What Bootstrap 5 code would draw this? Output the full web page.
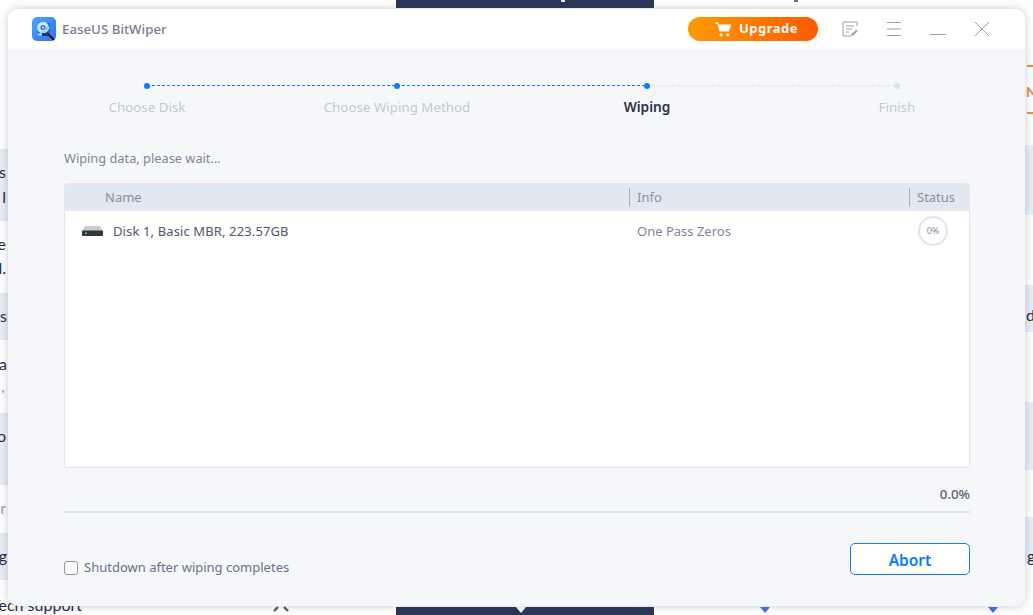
<!doctype html>
<html lang="en">
<head>
<meta charset="utf-8">
<title>EaseUS BitWiper</title>
<link href="https://cdn.jsdelivr.net/npm/bootstrap@5.3.0/dist/css/bootstrap.min.css" rel="stylesheet">
<style>
html,body{margin:0;height:615px;overflow:hidden;background:#fff}
body{position:relative;width:1033px;font-family:"Noto Sans","Open Sans",sans-serif}
/* page behind the window */
.behind{position:absolute;inset:0;font-family:"Lato","Liberation Sans",sans-serif;color:#1f2a44;font-size:16px}
.behind .bandx{position:absolute;background:#e8edf5}
.behind .frag{position:absolute;line-height:20px;white-space:nowrap}
.behind .faint{color:#9aa0ad}
.navy{position:absolute;left:396px;width:258px;height:8px;background:#2a3557}
.oline{position:absolute;left:1027px;width:6px;height:2px;background:#f08a3c}
.tri{position:absolute;width:0;height:0;border-left:5px solid transparent;border-right:5px solid transparent;border-top:6px solid #3b74e8}
.speck{position:absolute;top:0;width:4px;height:2px;background:#6b7080}
/* window */
.appwin{position:absolute;left:8px;top:9px;width:1017px;height:597px;background:#f5f7fb;border-radius:10px;box-shadow:0 0 8px rgba(60,70,100,.28);overflow:hidden;display:flex;flex-direction:column}
.titlebar{height:40px;background:#fff;padding-left:24px;flex:none}
.apptitle{font-size:13.3px;font-weight:500;color:#787c92;margin-left:6px;line-height:24px}
.upgrade{width:130px;height:24px;border-radius:12px;background:linear-gradient(90deg,#ff9a00,#ff5a00);color:#fff;font-size:13px;font-weight:700;letter-spacing:.5px;margin-left:auto;padding:0 0 0 27px;border:0;gap:7px}
.upgrade:hover,.upgrade:active{color:#fff}
.winicons{margin-left:24px;margin-right:35px}
.winicons svg{display:block}
.stepper{display:grid;grid-template-columns:repeat(4,250px);margin:34px 0 0 14px;flex:none}
.stepx{position:relative;display:flex;flex-direction:column;align-items:center}
.dotx{width:6px;height:6px;border-radius:50%;background:#0a7cff;position:relative;z-index:1}
.stepx.todo .dotx{background:#dfe3ee}
.stepx:not(:last-child)::after{content:"";position:absolute;left:125px;width:250px;top:2px;height:1px;background:repeating-linear-gradient(90deg,#0a7cff 0 3px,transparent 3px 5px)}
.stepx.pending::after{background:repeating-linear-gradient(90deg,#dfe3ee 0 3px,transparent 3px 5px) !important}
.steplabel{font-size:13.35px;line-height:18px;color:#c3c7d2;margin-top:9px}
.stepx.cur .steplabel{color:#2b3145;font-weight:600;font-size:13.7px}
.content{padding:0 55px 0 56px;flex:1;display:flex;flex-direction:column}
.waitline{font-size:12.8px;line-height:18px;color:#7f8496;margin-top:33px;height:18px}
.tablebox{margin-top:16px;height:285px;background:#fff;border:1px solid #e3e7ef;border-top:0;border-radius:4px 4px 2px 2px;overflow:hidden}
.thead-x{height:28px;background:#e2e8f0;font-size:13px;color:#8a8fa0;line-height:28px}
.cell-name{width:564px;padding-left:40px}
.cell-info{width:280px;padding-left:8px;position:relative}
.cell-stat{flex:1;padding-left:8px;position:relative}
.thead-x .cell-info::before,.thead-x .cell-stat::before{content:"";position:absolute;left:0;top:5px;height:18px;width:1px;background:#a7adbb}
.trow{height:40px;font-size:13px;color:#4f5a72;line-height:40px}
.trow .cell-name{padding-left:16px;gap:8px;color:#4f566b;letter-spacing:.12px}
.trow .cell-name span{margin-left:1px}
.trow .cell-info{color:#80859a}
.pct{width:30px;height:30px;border-radius:50%;border:2px solid #e1e4ec;font-size:9px;color:#8a8fa0;margin-left:1px;margin-top:5px;line-height:26px;text-align:center}
.pctval{font-size:13.4px;font-weight:500;color:#5b6072;text-align:right;margin-top:17px;line-height:18px;height:18px}
.pbar{height:2px;background:#dde2ed;margin-top:8px}
.footerx{margin-top:30px;height:32px}
.shut{font-size:13px;color:#6a7186;margin-top:17px}
.shut .form-check-input{width:14px;height:14px;margin:0 6px 0 0;float:none;border:1px solid #8f95a6;border-radius:3px;background-color:#fff}
.abortbtn{width:120px;height:32px;padding:1px 0 0;font-size:15.5px;font-weight:600;line-height:30px;color:#0a7cff;background:#fff;border:1px solid #0a7cff;border-radius:5px;margin-left:auto}
</style>
</head>
<body>
<div class="behind" aria-hidden="true">
  <div class="navy" style="top:0"></div>
  <div class="navy" style="top:607px"></div>
  <div class="speck" style="left:561px;background:#e6e8ee"></div>
  <div class="speck" style="left:794px"></div>
  <div class="bandx" style="left:0;width:8px;top:149px;height:72px"></div>
  <div class="bandx" style="left:0;width:8px;top:293px;height:47px"></div>
  <div class="bandx" style="left:0;width:8px;top:413px;height:72px"></div>
  <div class="bandx" style="left:0;width:8px;top:533px;height:47px"></div>
  <div class="bandx" style="left:1025px;width:8px;top:145px;height:70px"></div>
  <div class="bandx" style="left:1025px;width:8px;top:285px;height:47px"></div>
  <div class="bandx" style="left:1025px;width:8px;top:402px;height:68px"></div>
  <div class="bandx" style="left:1025px;width:8px;top:517px;height:46px"></div>
  <div class="frag" style="right:1027px;top:162px">s</div>
  <div class="frag" style="right:1027px;top:187px">l</div>
  <div class="frag" style="right:1027px;top:234px">e</div>
  <div class="frag" style="right:1027px;top:258px">l.</div>
  <div class="frag" style="right:1026px;top:306px">rs</div>
  <div class="frag" style="right:1026px;top:354px">a</div>
  <div class="frag faint" style="right:1028px;top:376px">,</div>
  <div class="frag" style="right:1027px;top:426px">o</div>
  <div class="frag faint" style="right:1027px;top:498px">r</div>
  <div class="frag" style="right:1026px;top:546px">g</div>
  <div class="frag" style="left:-9px;top:595px">Tech support</div>
  <div class="frag" style="left:1026px;top:305px">d</div>
  <div class="frag" style="left:1027px;top:546px">g</div>
  <div class="frag" style="left:1026px;top:82px;color:#f08a3c;font-weight:700;font-size:14px">N</div>
  <div class="oline" style="top:65px"></div>
  <div class="oline" style="top:112px"></div>
  <div class="tri" style="left:760px;top:607px"></div>
  <div class="tri" style="left:988px;top:607px"></div>
  <div class="tri" style="left:516px;top:607px;border-top-color:#fff"></div>
  <svg style="position:absolute;left:273px;top:606px" width="16" height="8" viewBox="0 0 16 8"><path d="M1 5 5 1M11 1l4 4" stroke="#555b66" stroke-width="2.4" fill="none"/></svg>
</div>

<div class="appwin">
  <div class="titlebar d-flex align-items-center">
    <svg width="24" height="24" viewBox="0 0 24 24" class="flex-none">
      <defs><linearGradient id="lg" x1="0" y1="0" x2="1" y2="1"><stop offset="0" stop-color="#4aa8f8"/><stop offset="1" stop-color="#2f6ff0"/></linearGradient></defs>
      <rect width="24" height="24" rx="5" fill="url(#lg)"/>
      <path d="M6 6h12v11H6z" fill="#1f4fa8" opacity=".55"/>
      <circle cx="11" cy="10.500" r="5.800" fill="#cfe6fb"/>
      <circle cx="11" cy="10.500" r="2.600" fill="#2f6fd8"/>
      <circle cx="11" cy="10.500" r="1" fill="#d9ecff"/>
      <path d="M5 18l11-9 2 2-9 8z" fill="#8fd0ff"/>
      <path d="M15 16l7 7" stroke="#10151f" stroke-width="1.800"/>
      <path d="M10 19h6v-3h-6z" fill="#1a3a70"/>
    </svg>
    <span class="apptitle">EaseUS BitWiper</span>
    <button class="upgrade btn d-flex align-items-center justify-content-start" type="button">
      <svg width="17" height="15" viewBox="0 0 17 15"><path d="M.5 1H3l2 8h8.500l2-6H4" fill="#fff" stroke="#fff" stroke-width="1.200" stroke-linejoin="round"/><path d="M.5 1H3" stroke="#fff" stroke-width="1.600" fill="none"/><circle cx="6" cy="12.800" r="1.500" fill="#fff"/><circle cx="12.800" cy="12.800" r="1.500" fill="#fff"/></svg>
      <span>Upgrade</span>
    </button>
    <div class="winicons d-flex align-items-center">
      <svg width="16" height="16" viewBox="0 0 16 16" fill="none" stroke="#98a0b0" stroke-width="1"><path d="M15 5V1H1v14h8"/><path d="M4 5h8M4 8h6M4 11h3"/><path d="M9.500 14.500 15 9.500" stroke-width="2"/></svg>
      <svg width="16" height="16" viewBox="0 0 16 16" fill="none" stroke="#98a0b0" stroke-width="1" style="margin-left:28px"><path d="M1 1.500h14M1 8h14M1 14.500h14"/></svg>
      <svg width="18" height="16" viewBox="0 0 18 16" fill="none" stroke="#98a0b0" stroke-width="1" style="margin-left:27px"><path d="M1 13.500h16"/></svg>
      <svg width="16" height="16" viewBox="0 0 16 16" fill="none" stroke="#98a0b0" stroke-width="1" style="margin-left:27px"><path d="M1 1l14 14M15 1 1 15"/></svg>
    </div>
  </div>

  <div class="stepper">
    <div class="stepx"><div class="dotx"></div><div class="steplabel">Choose Disk</div></div>
    <div class="stepx"><div class="dotx"></div><div class="steplabel">Choose Wiping Method</div></div>
    <div class="stepx cur pending"><div class="dotx"></div><div class="steplabel">Wiping</div></div>
    <div class="stepx todo"><div class="dotx"></div><div class="steplabel">Finish</div></div>
  </div>

  <div class="content">
    <div class="waitline">Wiping data, please wait...</div>
    <div class="tablebox">
      <div class="thead-x d-flex"><div class="cell-name">Name</div><div class="cell-info">Info</div><div class="cell-stat">Status</div></div>
      <div class="trow d-flex">
        <div class="cell-name d-flex align-items-center">
          <svg width="23" height="12" viewBox="0 0 23 12"><path d="M4 1h15l3 5H1z" fill="#c9cdd2"/><rect x="1" y="5.500" width="21" height="5.500" rx="1" fill="#33373c"/><rect x="4" y="7.500" width="2" height="1.500" fill="#3fd45a"/></svg>
          <span>Disk 1, Basic MBR, 223.57GB</span>
        </div>
        <div class="cell-info">One Pass Zeros</div>
        <div class="cell-stat"><div class="pct">0%</div></div>
      </div>
    </div>
    <div class="pctval">0.0%</div>
    <div class="pbar"></div>
    <div class="footerx d-flex align-items-center">
      <label class="shut d-flex align-items-center"><input class="form-check-input" type="checkbox"><span>Shutdown after wiping completes</span></label>
      <button class="abortbtn btn" type="button">Abort</button>
    </div>
  </div>
</div>
<script src="https://cdn.jsdelivr.net/npm/bootstrap@5.3.0/dist/js/bootstrap.bundle.min.js"></script>
</body>
</html>
